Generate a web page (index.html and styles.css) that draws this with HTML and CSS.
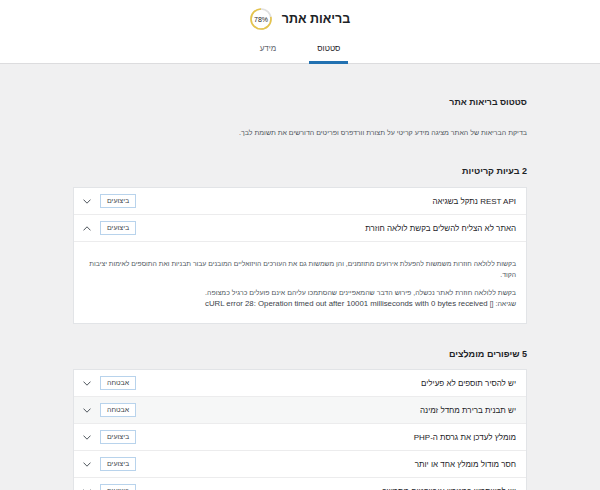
FILE: index.html
```html
<!DOCTYPE html>
<html lang="he" dir="rtl">
<head>
    <meta charset="UTF-8">
    <meta name="viewport" content="width=device-width, initial-scale=1.0">
    <title>בריאות אתר</title>
    <link rel="stylesheet" href="styles.css">
</head>
<body>
    <div class="health-header">
        <div class="title-row">
            <h1>בריאות אתר</h1>
            <svg class="progress" width="22" height="22" viewBox="0 0 22 22">
                <circle cx="11" cy="11" r="10" fill="none" stroke="#e0e0e0" stroke-width="1.6"/>
                <circle cx="11" cy="11" r="10" fill="none" stroke="#e6c44a" stroke-width="1.6"
                        stroke-dasharray="49 62.83" transform="translate(22 0) scale(-1 1) rotate(-90 11 11)"/>
                <text x="11" y="13.5" text-anchor="middle" class="progress-text">78%</text>
            </svg>
        </div>
        <nav class="tabs">
            <a class="tab active">סטטוס</a>
            <a class="tab">מידע</a>
        </nav>
    </div>

    <div class="content">
        <h2>סטטוס בריאות אתר</h2>
        <p class="intro">בדיקת הבריאות של האתר מציגה מידע קריטי על תצורת וורדפרס ופריטים הדורשים את תשומת לבך.</p>

        <h3>2 בעיות קריטיות</h3>
        <div class="accordion">
            <div class="trigger">
                <span class="label">REST API נתקל בשגיאה</span>
                <span class="badge">ביצועים</span>
                <svg class="chev" width="8" height="5" viewBox="0 0 8 5"><polyline points="0.5,0.6 4,4.2 7.5,0.6" fill="none" stroke="#50575e" stroke-width="1"/></svg>
            </div>
            <div class="trigger">
                <span class="label">האתר לא הצליח להשלים בקשת לולאה חוזרת</span>
                <span class="badge">ביצועים</span>
                <svg class="chev" width="8" height="5" viewBox="0 0 8 5"><polyline points="0.5,4.4 4,0.8 7.5,4.4" fill="none" stroke="#50575e" stroke-width="1"/></svg>
            </div>
            <div class="panel">
                <p class="first">בקשות ללולאה חוזרות משמשות להפעלת אירועים מתוזמנים, והן משמשות גם את העורכים הויזואליים המובנים עבור תבניות ואת התוספים לאימות יציבות הקוד.</p>
                <p>בקשת ללולאה חוזרת לאתר נכשלה, פירוש הדבר שהמאפיינים שהסתמכו עליהם אינם פועלים כרגיל כמצופה.<br>שגיאה: [] <span class="latin">cURL error 28: Operation timed out after 10001 milliseconds with 0 bytes received</span></p>
            </div>
        </div>

        <h3 class="second">5 שיפורים מומלצים</h3>
        <div class="accordion">
            <div class="trigger">
                <span class="label">יש להסיר תוספים לא פעילים</span>
                <span class="badge">אבטחה</span>
                <svg class="chev" width="8" height="5" viewBox="0 0 8 5"><polyline points="0.5,0.6 4,4.2 7.5,0.6" fill="none" stroke="#50575e" stroke-width="1"/></svg>
            </div>
            <div class="trigger hover">
                <span class="label">יש תבנית ברירת מחדל זמינה</span>
                <span class="badge">אבטחה</span>
                <svg class="chev" width="8" height="5" viewBox="0 0 8 5"><polyline points="0.5,0.6 4,4.2 7.5,0.6" fill="none" stroke="#50575e" stroke-width="1"/></svg>
            </div>
            <div class="trigger">
                <span class="label">מומלץ לעדכן את גרסת ה-PHP</span>
                <span class="badge">ביצועים</span>
                <svg class="chev" width="8" height="5" viewBox="0 0 8 5"><polyline points="0.5,0.6 4,4.2 7.5,0.6" fill="none" stroke="#50575e" stroke-width="1"/></svg>
            </div>
            <div class="trigger">
                <span class="label">חסר מודול מומלץ אחד או יותר</span>
                <span class="badge">ביצועים</span>
                <svg class="chev" width="8" height="5" viewBox="0 0 8 5"><polyline points="0.5,0.6 4,4.2 7.5,0.6" fill="none" stroke="#50575e" stroke-width="1"/></svg>
            </div>
            <div class="trigger">
                <span class="label">יש להשתמש במטמון אובייקטים מתמשך</span>
                <span class="badge">ביצועים</span>
                <svg class="chev" width="8" height="5" viewBox="0 0 8 5"><polyline points="0.5,0.6 4,4.2 7.5,0.6" fill="none" stroke="#50575e" stroke-width="1"/></svg>
            </div>
        </div>
    </div>
</body>
</html>
```

FILE: styles.css
```css
body {
    font-family: "Liberation Sans", Arial, sans-serif;
    margin: 0;
    background-color: #f0f0f1;
    color: #3c434a;
}

.health-header {
    background-color: #fff;
    border-bottom: 1px solid #dcdcde;
    height: 64px;
    padding-top: 8px;
    box-sizing: border-box;
    display: flex;
    flex-direction: column;
    align-items: center;
}

.title-row {
    display: flex;
    align-items: center;
    gap: 10px;
    height: 22px;
}

h1 {
    margin: 0;
    font-size: 12.5px;
    font-weight: 600;
    color: #1d2327;
}

.progress-text {
    font-size: 7px;
    fill: #1d2327;
    font-family: "Liberation Sans", Arial, sans-serif;
}

.tabs {
    display: flex;
    gap: 25px;
    margin-top: 6px;
}

.tab {
    height: 28px;
    line-height: 25px;
    padding: 0 8px;
    font-size: 8px;
    color: #646970;
    box-sizing: border-box;
    border-bottom: 3px solid transparent;
}

.tab.active {
    color: #1d2327;
    border-bottom-color: #2271b1;
}

.content {
    width: 454px;
    margin: 0 auto;
    padding-top: 31px;
}

h2 {
    margin: 0;
    font-size: 8.8px;
    line-height: 14px;
    color: #1d2327;
}

.intro {
    margin: 18px 0 0;
    font-size: 7px;
    line-height: 12px;
    color: #50575e;
}

h3 {
    margin: 25px 0 9px;
    font-size: 9px;
    line-height: 14px;
    color: #1d2327;
}

h3.second {
    margin-top: 23px;
    margin-bottom: 8px;
}

.accordion {
    background-color: #fff;
    border: 1px solid #e2e4e7;
}

.trigger {
    display: flex;
    align-items: center;
    height: 26px;
    padding: 0 10px 0 9px;
    border-top: 1px solid #ececed;
    font-size: 8px;
    color: #1d2327;
}

.trigger:first-child {
    border-top: none;
}

.trigger.hover {
    background-color: #f6f7f7;
}

.label {
    flex: 1;
}

.badge {
    border: 1px solid #b8d3ec;
    padding: 0 6px;
    height: 12px;
    line-height: 12px;
    font-size: 7px;
    color: #3c434a;
    margin-left: 9px;
    background-color: #fff;
}

.chev {
    display: block;
}

.panel {
    padding: 9px 10px 6px 9px;
    border-top: 1px solid #ececed;
}

.panel p {
    margin: 8px 0;
    font-size: 7px;
    line-height: 10.5px;
    color: #50575e;
}

.panel p.first {
    font-size: 6.8px;
}

.panel .latin {
    font-size: 7.8px;
    color: #3c434a;
}
```
